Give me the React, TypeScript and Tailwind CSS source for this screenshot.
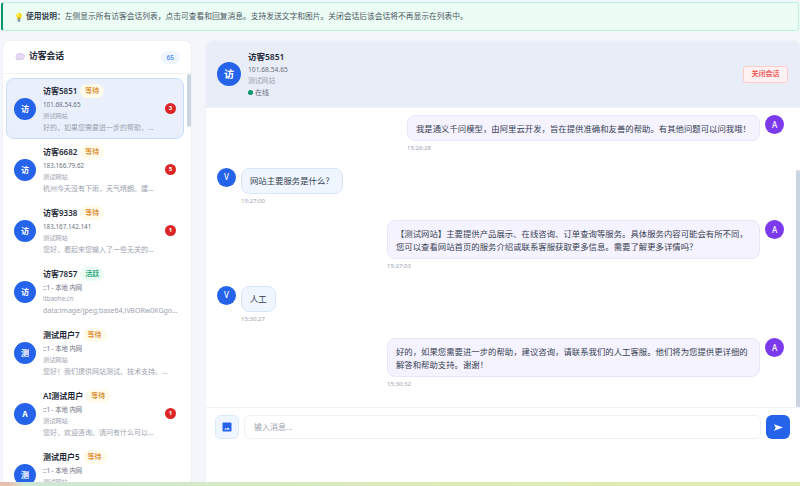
const sessions = [
  { name: "访客5851", tag: "等待", ip: "101.68.54.65", site: "测试网站", msg: "好的，如果您需要进一步的帮助，...", badge: 3, letter: "访", active: true },
  { name: "访客6682", tag: "等待", ip: "183.166.79.62", site: "测试网站", msg: "杭州今天没有下雨，天气晴朗。建...", badge: 5, letter: "访" },
  { name: "访客9338", tag: "等待", ip: "183.167.142.141", site: "测试网站", msg: "您好，看起来您输入了一些无关的...", badge: 1, letter: "访" },
  { name: "访客7857", tag: "活跃", ip: "::1 - 本地 内网", site: "itbaohe.cn", msg: "data:image/jpeg;base64,iVBORw0KGgo...", letter: "访" },
  { name: "测试用户7", tag: "等待", ip: "::1 - 本地 内网", site: "测试网站", msg: "您好！我们提供网站测试、技术支持、...", letter: "测" },
  { name: "AI测试用户", tag: "等待", ip: "::1 - 本地 内网", site: "测试网站", msg: "您好，欢迎咨询。请问有什么可以...", badge: 1, letter: "A" },
  { name: "测试用户5", tag: "等待", ip: "::1 - 本地 内网", site: "测试网站", msg: "您好，欢迎咨询。", letter: "测" },
];

const messages = [
  { side: "agent", time: "15:26:28", text: "我是通义千问模型，由阿里云开发，旨在提供准确和友善的帮助。有其他问题可以问我哦！" },
  { side: "user", time: "15:27:00", text: "网站主要服务是什么？" },
  { side: "agent", time: "15:27:03", text: "【测试网站】主要提供产品展示、在线咨询、订单查询等服务。具体服务内容可能会有所不同，您可以查看网站首页的服务介绍或联系客服获取更多信息。需要了解更多详情吗？" },
  { side: "user", time: "15:30:27", text: "人工" },
  { side: "agent", time: "15:30:32", text: "好的，如果您需要进一步的帮助，建议咨询，请联系我们的人工客服。他们将为您提供更详细的解答和帮助支持。谢谢！" },
];

function SessionCard({ s }: { s: (typeof sessions)[number] }) {
  return (
    <div className={s.active ? "flex h-[61px] items-center rounded-lg border border-[#c9dcfb] bg-[#e9f0fc] pl-[7px] pr-[7px]" : "flex h-[61px] items-center rounded-lg border border-transparent pl-[7px] pr-[7px]"}>
      <div className="flex h-[22px] w-[22px] shrink-0 items-center justify-center rounded-full bg-[#2563eb] text-[8px] font-bold text-white">{s.letter}</div>
      <div className="ml-[7px] min-w-0 flex-1">
        <div className="flex h-[14px] items-center">
          <span className="text-[8px] leading-none font-semibold text-[#1f2937]">{s.name}</span>
          <span className={s.tag === "活跃" ? "ml-[3px] rounded-full bg-[#ecfdf5] px-[5px] py-[2px] text-[7px] leading-[10px] font-medium text-[#059669]" : "ml-[3px] rounded-full bg-[#fffbeb] px-[5px] py-[2px] text-[7px] leading-[10px] font-medium text-[#d97706]"}>{s.tag}</span>
        </div>
        <div className="mt-[2px] text-[6.3px] leading-[10px] text-[#6b7280]">{s.ip}</div>
        <div className="text-[6.2px] leading-[11px] text-[#9ca3af]">{s.site}</div>
        <div className="whitespace-nowrap text-[7px] leading-[13px] text-[#9ca3af]">{s.msg}</div>
      </div>
      {s.badge && (
        <div className="ml-[5px] flex h-[11px] w-[11px] shrink-0 items-center justify-center rounded-full bg-[#dc2626] text-[6px] font-bold text-white">{s.badge}</div>
      )}
    </div>
  );
}

function Message({ m }: { m: (typeof messages)[number] }) {
  if (m.side === "agent") {
    return (
      <div className="flex justify-end gap-[5px]">
        <div className="flex max-w-[373px] flex-col">
          <div className="rounded-lg border border-[#e9e5fb] bg-[#f5f3ff] px-[8px] py-[5.5px] text-[8.4px] leading-[13px] text-[#374151]">{m.text}</div>
          <div className="mt-[2px] text-[6px] leading-[10px] text-[#9ca3af]">{m.time}</div>
        </div>
        <div className="flex h-[19px] w-[19px] shrink-0 items-center justify-center rounded-full bg-[#7c3aed] text-[8px] font-medium text-white">A</div>
      </div>
    );
  }
  return (
    <div className="flex gap-[5px]">
      <div className="flex h-[19px] w-[19px] shrink-0 items-center justify-center rounded-full bg-[#2563eb] text-[8px] font-medium text-white">V</div>
      <div className="flex flex-col items-start">
        <div className="rounded-lg border border-[#d6e6fb] bg-[#eff6ff] px-[8px] py-[5.5px] text-[8.4px] leading-[13px] text-[#374151]">{m.text}</div>
        <div className="mt-[2px] text-[6px] leading-[10px] text-[#9ca3af]">{m.time}</div>
      </div>
    </div>
  );
}

export default function App() {
  return (
    <div className="flex h-[486px] w-[800px] flex-col overflow-hidden bg-[#f4f6fb] font-['Noto_Sans','Noto_Sans_CJK_SC',sans-serif]">
      <div className="mx-px mt-[2px] flex h-[29px] shrink-0 items-center rounded-[3px] border border-l-2 border-[#b9f4d9] border-l-[#059669] bg-[#ecfdf5] pl-[11px] text-[7.75px] text-[#4b5563]">
        <span className="text-[8px]">💡</span>
        <span className="ml-[2px] font-semibold text-[#374151]">使用说明：</span>
        <span>左侧显示所有访客会话列表，点击可查看和回复消息。支持发送文字和图片。关闭会话后该会话将不再显示在列表中。</span>
      </div>

      <div className="mt-[9px] flex min-h-0 flex-1 gap-[13px] pl-[2px]">
        <div className="flex w-[190px] shrink-0 flex-col overflow-hidden rounded-t-lg border border-b-0 border-[#eef1f6] bg-white">
          <div className="flex h-[33px] shrink-0 items-center justify-between border-b border-[#eef1f6] pl-[12px] pr-[11px]">
            <div className="flex items-center gap-[4px] text-[8.75px] font-semibold text-[#1f2937]">
              <svg viewBox="0 0 20 16" className="h-[8px] w-[10px]">
                <ellipse cx="10.5" cy="7" rx="8.5" ry="6" fill="#e4daf5" stroke="#cdbfe8" strokeWidth="1.5" />
                <path d="M4 11l-2 4 6-2z" fill="#cdbfe8" />
              </svg>
              访客会话
            </div>
            <span className="rounded-full bg-[#eff6ff] px-[6px] py-[3px] text-[6.5px] leading-[7px] font-medium text-[#3b82f6]">65</span>
          </div>
          <div className="relative min-h-0 flex-1 overflow-hidden">
            <div className="flex flex-col pt-[4px] pl-[3px] pr-[7px]">
              {sessions.map((s) => (
                <SessionCard key={s.name} s={s} />
              ))}
            </div>
            <div className="absolute top-0 right-0 h-[53px] w-[4px] rounded-full bg-[#cbd5e1]" />
          </div>
        </div>

        <div className="flex min-w-0 flex-1 flex-col overflow-hidden rounded-t-lg border border-b-0 border-r-0 border-[#eef1f6] bg-white">
          <div className="flex h-[67px] shrink-0 items-center justify-between border-b border-[#eef1f6] bg-[#e8edf8] pl-[11px] pr-[12px]">
            <div className="flex items-center gap-[7px]">
              <div className="flex h-[24px] w-[24px] items-center justify-center rounded-full bg-[#2563eb] text-[10px] font-semibold text-white">访</div>
              <div>
                <div className="text-[8.5px] leading-[12px] font-semibold text-[#1f2937]">访客5851</div>
                <div className="mt-[2px] text-[6.7px] leading-[10px] text-[#6b7280]">101.68.54.65</div>
                <div className="mt-px text-[6.8px] leading-[10px] text-[#9ca3af]">测试网站</div>
                <div className="mt-[2px] flex items-center gap-[2px] text-[7px] leading-[10px] text-[#6b7280]">
                  <span className="h-[5px] w-[5px] rounded-full bg-[#059669]" />
                  在线
                </div>
              </div>
            </div>
            <button className="flex h-[17px] w-[45px] items-center justify-center rounded-[3px] border border-[#fecaca] bg-[#fef2f2] text-[7px] font-medium text-[#ef4444]">关闭会话</button>
          </div>

          <div className="relative min-h-0 flex-1 overflow-hidden">
            <div className="flex flex-col gap-[14.5px] pt-[7px] pl-[11px] pr-[16px]">
              {messages.map((m) => (
                <Message key={m.time} m={m} />
              ))}
            </div>
            <div className="absolute top-[62px] right-0 h-[238px] w-[4px] rounded-full bg-[#cbd5e1]" />
          </div>

          <div className="flex h-[75px] shrink-0 items-start gap-[5px] border-t border-[#eef1f6] pt-[7px] pl-[9px] pr-[10px]">
            <button className="flex h-[24px] w-[24px] shrink-0 items-center justify-center rounded-md border border-[#dbe8fd] bg-[#eff6ff]">
              <svg viewBox="0 0 24 24" className="h-[12px] w-[12px]" fill="#2563eb">
                <path d="M5 3h14a2 2 0 0 1 2 2v14a2 2 0 0 1-2 2H5a2 2 0 0 1-2-2V5a2 2 0 0 1 2-2z" />
                <path d="M6 17l3.5-3 2 2 2.5-3 4 4z" fill="#fff" />
              </svg>
            </button>
            <div className="flex h-[24px] min-w-0 flex-1 items-center rounded-md border border-[#eef1f6] bg-white pl-[9px] text-[8px] text-[#9ca3af]">输入消息...</div>
            <button className="flex h-[24px] w-[24px] shrink-0 items-center justify-center rounded-md bg-[#2563eb]">
              <svg viewBox="0 0 24 24" className="h-[11px] w-[11px]" fill="#fff">
                <path d="M2 5l20 7-20 7 4-7z" />
              </svg>
            </button>
          </div>
        </div>
      </div>

      <div className="h-[4px] shrink-0 bg-[linear-gradient(90deg,#e8bfae_0%,#e8bfae_1%,#cfe6d6_3%,#dcebb8_50%,#e0edb0_100%)]" />
    </div>
  );
}
